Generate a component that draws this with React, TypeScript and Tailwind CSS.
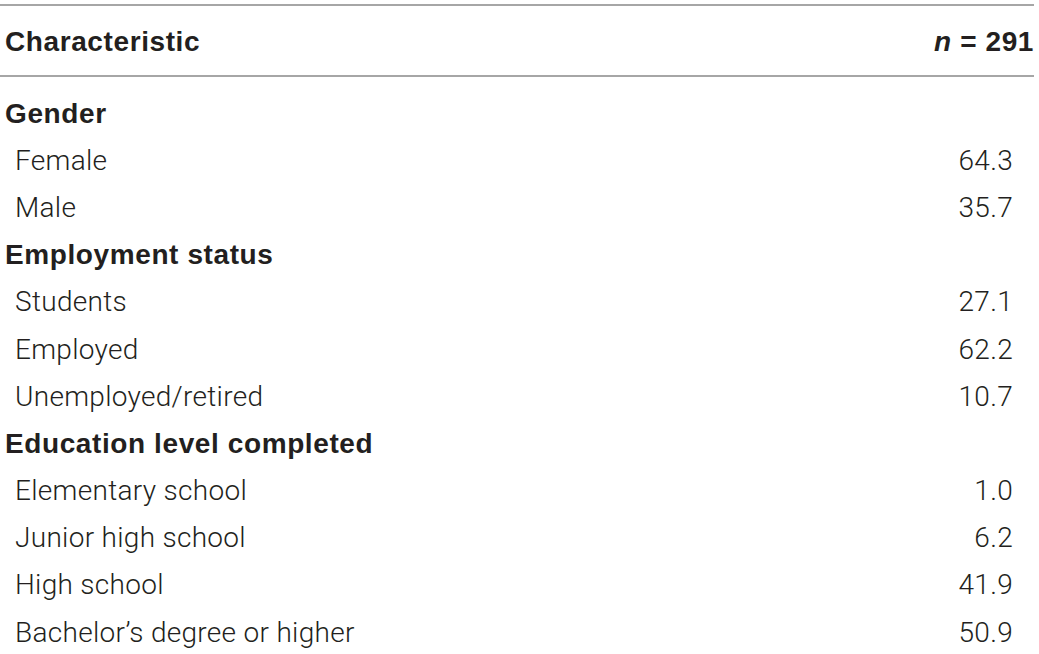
const groups: { title: string; rows: [string, string][] }[] = [
  { title: "Gender", rows: [["Female", "64.3"], ["Male", "35.7"]] },
  {
    title: "Employment status",
    rows: [
      ["Students", "27.1"],
      ["Employed", "62.2"],
      ["Unemployed/retired", "10.7"],
    ],
  },
  {
    title: "Education level completed",
    rows: [
      ["Elementary school", "1.0"],
      ["Junior high school", "6.2"],
      ["High school", "41.9"],
      ["Bachelor\u2019s degree or higher", "50.9"],
    ],
  },
];

export default function App() {
  return (
    <div className="w-[1039px] h-[654px] bg-white overflow-hidden pt-[4px] text-[#231f20]">
      <div className="w-[1034px] border-t-2 border-b-2 border-[#a6a6a6] h-[73px] flex items-center justify-between pl-[5px] pt-[2px] font-['Liberation_Sans',sans-serif] font-bold text-[28px] tracking-[0.6px]">
        <span>Characteristic</span>
        <span>
          <i>n</i> = 291
        </span>
      </div>
      <div className="pt-[13px]">
        {groups.map((g) => (
          <div key={g.title}>
            <div className="h-[47.2px] flex items-center pl-[5px] font-['Liberation_Sans',sans-serif] font-bold text-[28px] tracking-[0.6px]">
              {g.title}
            </div>
            {g.rows.map(([label, value]) => (
              <div
                key={label}
                className="h-[47.2px] flex items-center justify-between pl-[15px] w-[1013px] font-['Roboto',sans-serif] font-light text-[28px] tracking-[0.3px]"
              >
                <span>{label}</span>
                <span>{value}</span>
              </div>
            ))}
          </div>
        ))}
      </div>
    </div>
  );
}
